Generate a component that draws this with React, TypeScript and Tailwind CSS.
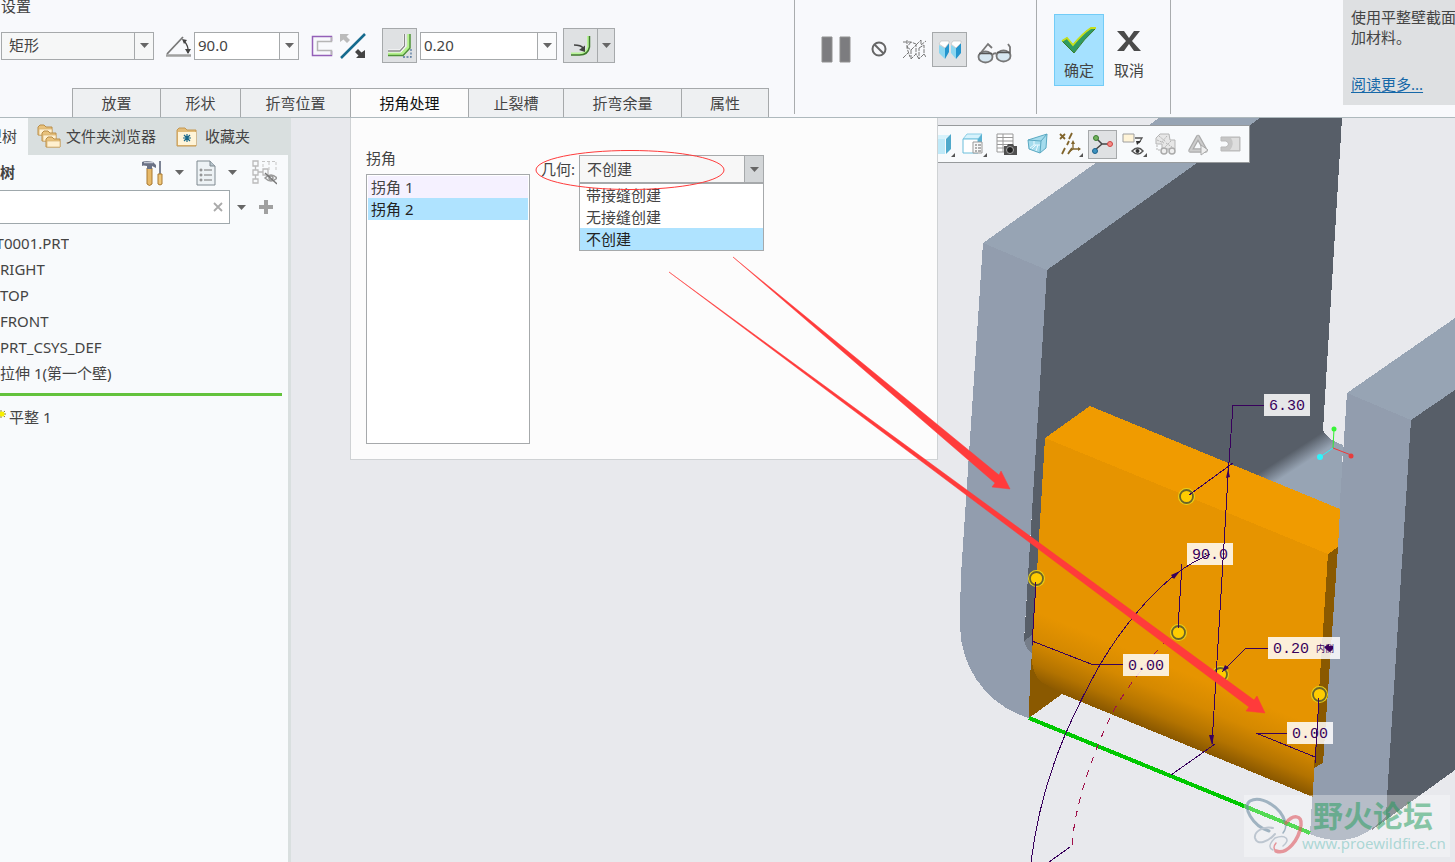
import { useState, type ReactNode } from 'react';

interface IconProps {
  w: number;
  h: number;
  children: ReactNode;
}

function Icon({ w, h, children }: IconProps) {
  return (
    <svg width={w} height={h} viewBox={`0 0 ${w} ${h}`} fill="none" className="block shrink-0" aria-hidden="true">
      {children}
    </svg>
  );
}

function Caret() {
  return (
    <Icon w={9} h={5}>
      <path d="M0 0h9L4.500 5z" fill="#666" />
    </Icon>
  );
}

function SmallCorner() {
  return <path d="M26 22v4h-4z" fill="#555" />;
}

interface ComboProps {
  id: string;
  label: string;
  value: string;
  className: string;
  onChange: (value: string) => void;
}

function Combo({ id, label, value, className, onChange }: ComboProps) {
  return (
    <div className={`flex h-7 border border-[#a6a9ab] bg-white ${className}`}>
      <input
        id={id}
        aria-label={label}
        value={value}
        onChange={(e) => onChange(e.target.value)}
        className="min-w-0 flex-1 px-[3px] outline-none"
      />
      <button type="button" aria-label={`${label} 列表`} className="flex w-[19px] items-center justify-center border-l border-[#a6a9ab] bg-[#fafbfc]">
        <Caret />
      </button>
    </div>
  );
}

const tabs = [
  { name: '放置', width: 'w-[89px]' },
  { name: '形状', width: 'w-[81px]' },
  { name: '折弯位置', width: 'w-[111px]' },
  { name: '拐角处理', width: 'w-[119px]' },
  { name: '止裂槽', width: 'w-[96px]' },
  { name: '折弯余量', width: 'w-[119px]' },
  { name: '属性', width: 'w-[88px]' },
];

function SettingsGroup() {
  const [angle, setAngle] = useState('90.0');
  const [radius, setRadius] = useState('0.20');
  const [active, setActive] = useState('拐角处理');

  return (
    <section className="flex h-[117px] w-[794px] shrink-0 flex-col">
      <h2 className="h-4 pl-px leading-3">设置</h2>
      <div className="mt-3 flex h-[35px] items-center pl-px">
        <div className="flex h-7 w-[153px] border border-[#a6a9ab] bg-[#f6f7f7]">
          <select aria-label="形状" className="min-w-0 flex-1 appearance-none px-[7px] outline-none">
            <option>矩形</option>
          </select>
          <span className="flex w-[19px] items-center justify-center border-l border-[#a6a9ab]">
            <Caret />
          </span>
        </div>
        <label htmlFor="angle" className="ml-3">
          <Icon w={26} h={22}>
            <path d="M0 20.500h25" stroke="#a0a0a0" strokeWidth="2.500" />
            <path d="M1 19L17 2" stroke="#777" strokeWidth="1.800" />
            <path d="M18 6q5 5 4 12" stroke="#444" strokeWidth="1.300" />
            <path d="M16 4l5 1-3 4zM19 14h6l-3 5z" fill="#444" />
          </Icon>
        </label>
        <Combo id="angle" label="角度" value={angle} onChange={setAngle} className="ml-0.5 w-[105px]" />
        <button type="button" aria-label="轮廓" className="ml-3">
          <Icon w={22} h={22}>
            <path d="M20.500 6V1.500H1.500v19h19V16" stroke="#9460b8" strokeWidth="1.500" />
            <path d="M20.500 2v4.500H6.500v9h14V20" stroke="#b5b5b5" strokeWidth="1.500" />
          </Icon>
        </button>
        <button type="button" aria-label="反向" className="ml-[7px]">
          <Icon w={26} h={26}>
            <path d="M1 25L25 1" stroke="#156a8e" strokeWidth="2.500" />
            <path d="M0 1h9L6.500 3.500 10 7 7 10 3.500 6.500 0 9z" fill="#bbb" />
            <path d="M25 25h-9l2.500-2.500L15 19l3-3 3.500 3.500L25 17z" fill="#444" />
          </Icon>
        </button>
        <button type="button" aria-label="在附件上添加折弯" className="ml-4 flex size-[35px] items-center justify-center border border-[#a6a9ab] bg-[#dfe1e3]">
          <Icon w={25} h={25}>
            <path d="M17.500 1v12l-4 5H1" stroke="#fff" strokeWidth="3" />
            <path d="M17.500 1v12l-4.500 5H1" stroke="#888" strokeWidth="1.300" />
            <path d="M21.500 1v13l-7 7H1" stroke="#b5f28c" strokeWidth="2.500" />
            <path d="M23 1v14l-7 7.500H1" stroke="#4f9238" strokeWidth="1.500" />
            <path d="M16 24h8v-8" stroke="#5577a0" strokeWidth="1.300" strokeDasharray="2 1.500" />
          </Icon>
        </button>
        <Combo id="radius" label="半径" value={radius} onChange={setRadius} className="ml-[3px] w-[137px]" />
        <div className="ml-1.5 flex h-[35px] w-[52px] border border-[#a6a9ab] bg-[#dfe1e3]">
          <button type="button" aria-label="内侧" className="flex flex-1 items-center justify-center">
            <Icon w={20} h={22}>
              <path d="M17 1v11q-1.500 7-9.500 6.500H0" stroke="#b9f598" strokeWidth="2" />
              <path d="M18.500 1v11q-1.500 8-10 8H0" stroke="#3f7a2c" strokeWidth="1.500" />
              <path d="M3 10q7 0 9 3" stroke="#444" strokeWidth="1.500" />
              <path d="M14 10.500v6.500l-6-2z" fill="#444" />
            </Icon>
          </button>
          <button type="button" aria-label="半径选项" className="flex w-[17px] items-center justify-center border-l border-[#a6a9ab]">
            <Caret />
          </button>
        </div>
      </div>
      <nav className="mt-auto flex h-[29px] pl-[72px]">
        {tabs.map((tab) => (
          <button
            key={tab.name}
            type="button"
            onClick={() => setActive(tab.name)}
            className={`-mr-px border border-b-0 border-[#a6a9ab] ${tab.width} ${
              active === tab.name ? 'bg-[#fcfcfc] text-[#111]' : 'bg-[#eef0f2]'
            }`}
          >
            {tab.name}
          </button>
        ))}
      </nav>
    </section>
  );
}

function Ribbon() {
  return (
    <header className="flex h-[118px] items-start overflow-hidden border-b border-[#aeb9bd] bg-[#f8f9fc]">
      <SettingsGroup />
      <div className="flex h-[114px] w-[243px] shrink-0 items-start border-x border-[#a9acae] pt-8 pl-[26px]">
        <button type="button" aria-label="暂停" className="mt-1">
          <Icon w={30} h={27}>
            <path d="M1 1h10v25H1zM19 1h10v25H19z" fill="#7c7c7f" stroke="#919191" />
          </Icon>
        </button>
        <button type="button" aria-label="无预览" className="mt-[9px] ml-5">
          <Icon w={16} h={16}>
            <circle cx="8" cy="8" r="6.500" stroke="#666" strokeWidth="2" />
            <path d="M3.500 3.500l9 9" stroke="#666" strokeWidth="2" />
          </Icon>
        </button>
        <button type="button" aria-label="分离" className="mt-[7px] ml-[15px]">
          <Icon w={24} h={22}>
            <path
              d="M1 3h8l5 2M5 1v8l3 9M9 3l-4 5M1 19l5-5M5 8l4 3v9M9 11l5-5v9l-5 5M14 6l5-5M19 1v5l5-4M17 9l5-3v9l-5 5zM17 20l-3-5M22 15l2 3"
              stroke="#777"
              strokeDasharray="4 1"
            />
          </Icon>
        </button>
        <button type="button" aria-label="连接" className="ml-1.5 flex size-[35px] items-center justify-center border border-[#a6a9ab] bg-[#dfe1e3]">
          <Icon w={24} h={20}>
            <path d="M1 5l6 3v11l-6-6zM13 5l5 3v11l-5-6z" fill="#8bd6f0" />
            <path d="M7 8l4-5v9l-4 7zM18 8l5-5v10l-5 6z" fill="#2495cd" />
            <path d="M1 4l2-3h8v2L7 8zM13 4l2-3h8v2l-5 5z" fill="#fff" stroke="#b9b9b9" strokeWidth=".6" />
          </Icon>
        </button>
        <button type="button" aria-label="预览" className="mt-[10px] ml-2.5">
          <Icon w={35} h={22}>
            <path d="M2 13L11 2l4 4M15 13q3-3 5-1M33 13V5l-2-3" stroke="#777" strokeWidth="1.800" />
            <ellipse cx="8.500" cy="15" rx="7" ry="5.500" fill="#d7e7f1" stroke="#777" strokeWidth="1.800" />
            <ellipse cx="26.500" cy="14" rx="7" ry="5.500" fill="#d7e7f1" stroke="#777" strokeWidth="1.800" />
            <path d="M2 11.500h13M20 10.500h13" stroke="#555" strokeWidth="1.300" />
          </Icon>
        </button>
      </div>
      <div className="flex h-[114px] w-[134px] shrink-0 items-start border-r border-[#a9acae] pt-3.5 pl-[17px]">
        <button type="button" className="flex h-[72px] w-[50px] flex-col items-center border border-[#73ccf7] bg-[#a5e1ff] pt-3">
          <Icon w={36} h={27}>
            <path d="M1 14l5-3 6 7Q22 6 30 1h5Q23 12 13 26z" fill="#2f9a62" stroke="#397c26" />
            <path d="M1 14l5-3 6 7Q22 6 30 1h5" stroke="#c5df1c" strokeWidth="1.800" />
          </Icon>
          <span className="mt-1.5 leading-5">确定</span>
        </button>
        <button type="button" className="flex h-[72px] w-[50px] flex-col items-center pt-[17px]">
          <Icon w={24} h={20}>
            <path d="M0 0h7l5 7 5-7h6l-8 10 9 10h-7l-5-7-5 7H0l9-10z" fill="#4b4b4b" />
          </Icon>
          <span className="mt-[9px] leading-5">取消</span>
        </button>
      </div>
      <aside className="ml-auto h-[105px] w-28 shrink-0 overflow-hidden bg-[#dee0e2] pt-[7px] pl-2">
        <p className="leading-5 whitespace-nowrap">
          使用平整壁截面
          <br />
          加材料。
        </p>
        <a href="#more" className="mt-[27px] block leading-5 text-[#1668a8] underline underline-offset-2">
          阅读更多...
        </a>
      </aside>
    </header>
  );
}

const treeItems = ['RIGHT', 'TOP', 'FRONT', 'PRT_CSYS_DEF', '拉伸 1(第一个壁)'];

function ModelTree() {
  const [query, setQuery] = useState('');

  return (
    <aside className="w-[291px] shrink-0 overflow-hidden border-r-3 border-[#d9dfdf] bg-[#f8fafc]">
      <div className="-mr-[3px] flex h-[37px] bg-[#d9dfdf]">
        <button type="button" className="flex w-7 items-center justify-end overflow-hidden bg-[#f8fafc] pr-[11px] whitespace-nowrap">
          型树
        </button>
        <button type="button" className="ml-[9px] flex items-center gap-1">
          <Icon w={25} h={25}>
            {[0, 1, 2].map((i) => (
              <g key={i} transform={`translate(${i * 4} ${i * 6})`}>
                <path d="M1 3l2-2h4l2 2h6v8H1z" fill="#e9c27c" stroke="#b98d48" />
                <path d="M2 5h13v6H2z" fill="#fff0cf" stroke="#d4b06f" strokeWidth=".7" />
              </g>
            ))}
          </Icon>
          文件夹浏览器
        </button>
        <button type="button" className="ml-5 flex items-center gap-[7px]">
          <Icon w={22} h={20}>
            <path d="M1 3l2-2h6l2 2h9v16H1z" fill="#e3bd79" stroke="#c59852" />
            <path d="M2 5h18v13H2z" fill="#fff4d8" />
            <path d="M11 7v8M7 11h8M8 8l6 6M14 8l-6 6" stroke="#17678a" strokeWidth="1.200" />
          </Icon>
          收藏夹
        </button>
      </div>

      <div className="flex h-[35px] items-center pr-[11px]">
        <h2 className="mr-auto font-bold">树</h2>
        <button type="button" aria-label="设置" className="mr-3">
          <Icon w={21} h={26}>
            <path d="M5 8h5v16q-2.500 3-5 0z" fill="#e7b969" stroke="#a97931" />
            <path d="M0 2q4-2 11 0l3 3v3l-4-2v3H5V6Q1 5 0 6z" fill="#6b7285" />
            <path d="M2 2.500h9" stroke="#c5cad5" strokeWidth="1.500" />
            <path d="M18 1v13" stroke="#7d8495" strokeWidth="2" />
            <path d="M16 14h4v10q-2 2-4 0z" fill="#efc77a" stroke="#a97931" />
          </Icon>
        </button>
        <Caret />
        <button type="button" aria-label="显示" className="mx-3">
          <Icon w={20} h={26}>
            <path d="M1 1h13l5 5v19H1z" fill="#edf2f5" stroke="#7f8990" />
            <path d="M14 1v5h5" stroke="#7f8990" fill="#b7c4cc" />
            <path d="M8 10h8M8 15h8M8 20h8" stroke="#777" />
            <circle cx="5" cy="10" r="1" stroke="#777" />
            <circle cx="5" cy="15" r="1" stroke="#777" />
            <circle cx="5" cy="20" r="1" stroke="#777" />
          </Icon>
        </button>
        <Caret />
        <button type="button" aria-label="隐藏列" className="ml-[15px]">
          <Icon w={25} h={25}>
            <path d="M1 1h5v5H1zM1 10h5v5H1zM1 19h5v4H1zM3.500 6v4M3.500 15v4M6 12h5M11 9h5v6h-5z" stroke="#bbb" strokeWidth="1.300" />
            <path d="M10 1.500h13M11 4v3M17 2v8M24 2v8" stroke="#c6c6c6" strokeDasharray="3 2" />
            <path d="M13 18q6-6 12 0-6 6-12 0z" stroke="#999" strokeWidth="1.500" />
            <circle cx="19" cy="18" r="2" stroke="#999" strokeWidth="1.500" />
            <path d="M13 13l12 11" stroke="#777" strokeWidth="1.300" />
          </Icon>
        </button>
      </div>

      <div className="flex items-center">
        <div className="flex h-[34px] w-[230px] items-center border border-l-0 border-[#9fa8ac] bg-white pr-1.5">
          <input aria-label="搜索" value={query} onChange={(e) => setQuery(e.target.value)} className="min-w-0 flex-1 outline-none" />
          <button type="button" aria-label="清除" onClick={() => setQuery('')}>
            <Icon w={10} h={10}>
              <path d="M1 1l8 8M9 1L1 9" stroke="#aaa" strokeWidth="1.800" />
            </Icon>
          </button>
        </div>
        <button type="button" aria-label="搜索选项" className="ml-[7px]">
          <Caret />
        </button>
        <button type="button" aria-label="添加" className="ml-[13px]">
          <Icon w={14} h={14}>
            <path d="M7 0v14M0 7h14" stroke="#a0a0a0" strokeWidth="4" />
          </Icon>
        </button>
      </div>

      <ul className="mt-1.5 leading-[26px] whitespace-nowrap">
        <li className="flex w-[69px] justify-end overflow-hidden">T0001.PRT</li>
        {treeItems.map((item) => (
          <li key={item}>{item}</li>
        ))}
        <li className="mt-[7px] mr-1.5 mb-2 h-[3px] bg-[#63c23c]" />
        <li className="flex items-center gap-0.5">
          <Icon w={7} h={16}>
            <path d="M1 1v8M-3 5h9M-2 2l7 6M-2 8l7-6" stroke="#8b8520" />
            <circle cx="2" cy="5" r="2.500" fill="#f8f000" />
          </Icon>
          平整 1
        </li>
      </ul>
    </aside>
  );
}

const corners = ['拐角 1', '拐角 2'];
const geometryOptions = ['带接缝创建', '无接缝创建', '不创建'];

function CornerPanel() {
  const [corner, setCorner] = useState('拐角 2');
  const [geometry, setGeometry] = useState('不创建');

  return (
    <section className="z-10 ml-[59px] flex h-[342px] w-[588px] shrink-0 items-start border border-t-0 border-[#cfd2d4] bg-[#fcfcfc] pl-[15px]">
      <div className="mt-[30px] w-[164px]">
        <h3 className="mb-1.5 leading-5">拐角</h3>
        <ul className="h-[270px] border border-[#a6a9ab] bg-white p-px leading-[22px]">
          {corners.map((name) => (
            <li key={name}>
              <button
                type="button"
                onClick={() => setCorner(name)}
                className={`w-full pl-[3px] text-left ${corner === name ? 'bg-[#afe3ff] text-[#222]' : 'bg-[#f5f1ff]'}`}
              >
                {name}
              </button>
            </li>
          ))}
        </ul>
      </div>
      <label htmlFor="geometry" className="mt-[37px] ml-[11px] w-[38px] leading-7">
        几何:
      </label>
      <div className="mt-[37px] w-[185px]">
        <div className="flex h-7 border border-[#a6a9ab] bg-[#f7f7f7]">
          <select
            id="geometry"
            value={geometry}
            onChange={(e) => setGeometry(e.target.value)}
            className="min-w-0 flex-1 appearance-none px-[7px] outline-none"
          >
            {geometryOptions.map((option) => (
              <option key={option}>{option}</option>
            ))}
          </select>
          <span className="flex w-[19px] items-center justify-center border-l border-[#a6a9ab] bg-[#d3d6d8]">
            <Caret />
          </span>
        </div>
        <ul className="border border-[#a6a9ab] bg-white leading-[22px]">
          {geometryOptions.map((option) => (
            <li key={option}>
              <button
                type="button"
                onClick={() => setGeometry(option)}
                className={`w-full pl-1.5 text-left ${geometry === option ? 'bg-[#afe3ff] text-[#222]' : ''}`}
              >
                {option}
              </button>
            </li>
          ))}
        </ul>
      </div>
    </section>
  );
}

const tools = [
  {
    name: '显示样式',
    icon: (
      <>
        <path d="M1 8l5-4h15l-5 4z" fill="#d7f2fb" />
        <path d="M1 8h15v15H1z" fill="#bfe9f8" />
        <path d="M17 8l5-5v15l-5 5z" fill="#4fa9cb" />
        <SmallCorner />
      </>
    ),
  },
  {
    name: '已保存方向',
    icon: (
      <>
        <path d="M2 8l4-5h15l-4 5z" fill="#d6f2fc" stroke="#8dcfe6" />
        <path d="M2 8h15v14H2z" fill="#fff" stroke="#6bbedb" />
        <path d="M17 8l4-5v12l-4 5z" fill="#5bb2d2" />
        <path d="M12 11h9v11h-9z" fill="#f8f8f8" stroke="#999" />
        <path d="M14 14h2M14 17h2M14 20h2M17 14h3M17 17h3M17 20h3" stroke="#666" />
        <SmallCorner />
      </>
    ),
  },
  {
    name: '视图管理器',
    icon: (
      <>
        <path d="M4 3h16v18H4zM4 6.500h16M4 10h16M4 13.500h16M4 17h16M10 3v18" fill="#fff" stroke="#999" />
        <path d="M11 15h3l1-2h5l1 2h3v9H11z" fill="#505050" />
        <circle cx="17" cy="19" r="3.500" fill="#222" stroke="#aaa" />
      </>
    ),
  },
  {
    name: '透视图',
    icon: (
      <>
        <path d="M3 9L22 3l-1 14-6 5-11-4z" fill="#a5dced" stroke="#5ba9c2" />
        <path d="M3 9l13 1 6-7M16 10l-1 12" stroke="#5ba9c2" />
        <path d="M5 17l4-3h6M9 14v-4M7 18l4-4M11 20l2-6" stroke="#eaf9ff" />
      </>
    ),
  },
  {
    name: '基准显示',
    icon: (
      <>
        <path d="M3 3l5 5M8 3L3 8M15 2l-3 6M12 10l-2 4M8 17l-3 6M15 17l-4 6" stroke="#80642b" strokeWidth="1.800" />
        <path d="M16 11v7h7M16 18l-4 3" stroke="#80642b" strokeWidth="1.300" />
        <path d="M14 13l2-4 2 4zM21 16l3 2-3 2z" fill="#80642b" />
        <SmallCorner />
      </>
    ),
  },
  {
    name: '旋转中心',
    pressed: true,
    icon: (
      <>
        <path d="M7 7l6 6h8M13 13l-7 6" stroke="#444" strokeWidth="1.500" />
        <circle cx="7" cy="7" r="2.500" fill="#71b35d" stroke="#3c7c31" />
        <circle cx="21" cy="13" r="2.500" fill="#f58a84" stroke="#c44" />
        <circle cx="6" cy="20" r="2.500" fill="#3d91be" stroke="#1c628c" />
      </>
    ),
  },
  {
    name: '注释显示',
    icon: (
      <>
        <path d="M2 3h11v8H2z" fill="#fff4d8" stroke="#9e9e9e" />
        <path d="M14 7h7l-3 5" stroke="#555" strokeWidth="1.300" />
        <path d="M15 10l5 0-4 4z" fill="#333" />
        <path d="M11 20q6-6 11 0-5 6-11 0z" fill="#fff" stroke="#555" strokeWidth="1.500" />
        <circle cx="16.500" cy="20" r="2" fill="#333" />
        <SmallCorner />
      </>
    ),
  },
  {
    name: '仿真查询',
    icon: (
      <>
        <path d="M3 7l4-4h9l1 6h5v9H9V13H3z" fill="#e7e7e7" stroke="#b5b5b5" />
        <path d="M6 5l7 6M14 5l-6 7M4 9l7 3M13 12l6 4M18 10l-6 6M4 14v5h4" stroke="#b5b5b5" strokeDasharray="2 1" />
        <circle cx="11" cy="20" r="3" fill="#eee" stroke="#aaa" strokeWidth="1.500" />
        <circle cx="19" cy="20" r="3" fill="#eee" stroke="#aaa" strokeWidth="1.500" />
      </>
    ),
  },
  {
    name: '失败项',
    icon: (
      <>
        <path d="M13 6L5.500 19.500h15z" stroke="#aaa" strokeWidth="4.500" strokeLinejoin="round" />
        <path d="M13 6L5.500 19.500h15z" stroke="#ccc" strokeWidth="2" />
        <path d="M16 14l7 5-7 5z" fill="#eee" stroke="#aaa" />
      </>
    ),
  },
  {
    name: '截面',
    icon: (
      <>
        <path d="M4 6h19v14H4v-4h5q5-3 0-6H4z" fill="#c6c6c6" stroke="#b9b9b9" />
        <path d="M14 7h8v12h-9q5-6 1-12z" fill="#dedede" />
      </>
    ),
  },
];

function ViewToolbar() {
  return (
    <div className="z-10 mt-[7px] flex h-[38px] w-[312px] shrink-0 items-center justify-end overflow-hidden border border-l-0 border-[#979a9c] bg-[#f8fafc] pr-[3px]">
      {tools.map((tool) => (
        <button key={tool.name} type="button" aria-label={tool.name} className="flex w-8 shrink-0 justify-center">
          <span className={`flex size-[29px] items-center justify-center ${tool.pressed ? 'border border-[#a6a9ab] bg-[#dfe1e3]' : ''}`}>
            <Icon w={27} h={27}>{tool.icon}</Icon>
          </span>
        </button>
      ))}
    </div>
  );
}

const handles = [
  [1186, 496],
  [1036, 578],
  [1178, 632],
  [1220, 674],
  [1319, 694],
];

const dimensions = [
  { x: 1264, y: 394, w: 46, text: '6.30' },
  { x: 1187, y: 543, w: 46, text: '90.0' },
  { x: 1123, y: 654, w: 46, text: '0.00' },
  { x: 1268, y: 637, w: 72, text: '0.20' },
  { x: 1287, y: 722, w: 46, text: '0.00' },
];

function ModelView() {
  return (
    <svg viewBox="291 118 1164 744" preserveAspectRatio="xMidYMid slice" className="absolute inset-0 size-full" fill="none">
      <defs>
        <linearGradient id="bend" gradientUnits="userSpaceOnUse" x1="1188" y1="745" x2="1213" y2="684">
          <stop offset="0" stopColor="#8a5800" />
          <stop offset=".25" stopColor="#b37300" />
          <stop offset=".6" stopColor="#d58900" />
          <stop offset="1" stopColor="#e69400" />
        </linearGradient>
        <linearGradient id="floor" gradientUnits="userSpaceOnUse" x1="1290" y1="453" x2="1299" y2="467">
          <stop offset="0" stopColor="#575e68" />
          <stop offset="1" stopColor="#97a4b4" />
        </linearGradient>
      </defs>

      <g shapeRendering="crispEdges">
        {/* left wall */}
        <path d="M1047 269L1260 118h82l-19 312-65 55-226 170-8-14z" fill="#575e68" />
        <path d="M1323 430q4 10 20 15l-3 66-86-35z" fill="url(#floor)" />
        <path d="M983 243L1159 118h101L1047 270z" fill="#97a4b4" />
        <path d="M983 243l64 27-23 370 8 12-3 66C990 707 960 670 960 625q0-25 1-50z" fill="#929dae" />
        <path d="M1024 641l8-6v18q-5-2-8-12z" fill="#757d89" />

        {/* right wall */}
        <path d="M1347 393l108-75v72l-44 31z" fill="#97a4b4" />
        <path d="M1411 420l44-30v380l-83 60-20-30z" fill="#575e68" />
        <path d="M1347 393l64 27-24 378-1 18q-22 24-47 24-16 0-29-6l4-67 9-4z" fill="#929dae" />

        {/* flat wall feature */}
        <path d="M1045 438l45-32 250 103-2 39-10 7z" fill="#f09b00" />
        <path d="M1045 438l283 116-14 214-1 29-251-103-33 10z" fill="url(#bend)" />
        <path d="M1328 554l10-7-15 216-9 5z" fill="#8a5900" />
        <path d="M1031 655q2 24 14 29l17 10-33 24z" fill="#8a5900" />
        <path d="M1029 718l281 115" stroke="#00c800" strokeWidth="4" />
      </g>

      {handles.map(([x, y]) => (
        <g key={`${x}-${y}`}>
          <circle cx={x + 0.5} cy={y + 0.5} r="8.500" fill="#e8cf18" />
          <circle cx={x + 0.5} cy={y + 0.5} r="6.500" fill="#ffcc00" stroke="#6b6428" strokeWidth="1.800" />
        </g>
      ))}

      <path
        d="M1072 845C1075 800 1098 738 1118 703Q1138 672 1164 643"
        stroke="#a0104a"
        strokeDasharray="7 7"
        shapeRendering="crispEdges"
      />
      {dimensions.map((d) => (
        <rect key={d.y} x={d.x} y={d.y} width={d.w} height="22" fill="#fff" fillOpacity=".85" />
      ))}
      <g stroke="#38005c" shapeRendering="crispEdges">
        <path d="M1264 405h-31l-5 72-16 267M1189 495l44-32M1215 744l-44 31" />
        <path d="M1036 582l-4 63M1032 641l59 23h32M1178 628l4-64" />
        <path d="M1031 862C1040 790 1062 732 1101 663Q1134 608 1176 574 1190 563 1210 554" />
        <path d="M1049 862l21-15M1268 648h-22l-24 24M1287 733h-31l59 24M1319 698l-4 65" />
      </g>
      <path
        d="M1228 469l2 8-4 1zM1212 745l-3-10h5zM1180 571l-9 4 3 4zM1222 672l3-7 4 3zM1324 647l5-3v2h4v3l-3 3-3-2z"
        fill="#38005c"
      />
      <g fill="#38005c" fontSize="15" className="font-['Liberation_Mono','Noto_Sans_CJK_SC',monospace]">
        {dimensions.map((d) => (
          <text key={d.y} x={d.x + 5} y={d.y + 16}>
            {d.text}
          </text>
        ))}
        <text x="1316" y="652" fontSize="9">
          内侧
        </text>
      </g>

      <path d="M1333 448l1-19" stroke="#2df02d" />
      <path d="M1333 448l18 7" stroke="#f03838" />
      <path d="M1333 448l-13 9" stroke="#2df0f8" />
      <circle cx="1334" cy="429" r="2.500" fill="#37f437" />
      <circle cx="1351" cy="456" r="2.500" fill="#e83c3c" />
      <circle cx="1320" cy="457" r="3" fill="#2df4fc" />

      {/* watermark */}
      <rect x="1244" y="795" width="206" height="62" fill="#fff" fillOpacity=".33" />
      <g strokeLinecap="round" opacity=".6">
        <path d="M1269 831C1252 826 1242 806 1250 801 1261 795 1281 807 1285 822" stroke="#6c8ba0" strokeWidth="3" />
        <path d="M1285 822q2 6-2 11" stroke="#6c8ba0" strokeWidth="1.500" />
        <path d="M1286 823C1293 814 1302 815 1301 825 1299 840 1287 855 1276 851" stroke="#df5961" strokeWidth="3.500" />
        <path d="M1276 851q-4-3 0-8" stroke="#df5961" strokeWidth="1.500" />
        <path d="M1273 828C1262 826 1254 832 1255 838 1257 846 1268 842 1275 834" stroke="#9dabba" strokeWidth="2" />
        <path d="M1275 838Q1266 847 1273 850M1275 838q8-3 11 0 3 3-3 8" stroke="#9dabba" strokeWidth="1.500" />
      </g>
      <text x="1313" y="827" fontSize="30" fontWeight="700" fill="#1c9a57" fillOpacity=".5" className="font-['Noto_Sans_CJK_SC',sans-serif]">
        野火论坛
      </text>
      <text x="1302" y="849" fontSize="15" fill="#86c8c4" fillOpacity=".65" className="font-['Noto_Sans',sans-serif]">
        www.proewildfire.cn
      </text>
    </svg>
  );
}

function Annotations() {
  return (
    <svg
      viewBox="291 118 1164 744"
      preserveAspectRatio="xMidYMid slice"
      className="pointer-events-none absolute inset-0 z-20 size-full"
      fill="#ff3b3b"
    >
      <ellipse cx="630" cy="170" rx="94" ry="19.500" fill="none" stroke="#ff3b3b" />
      <path d="M733 257L999 475l2-4 9 18-18-2 3-4L733 257z" stroke="#ff3b3b" strokeWidth=".5" />
      <path d="M669 272L1254 700l3-4 8 17-19-2 3-4L669 272z" stroke="#ff3b3b" strokeWidth=".5" />
    </svg>
  );
}

export default function App() {
  return (
    <div className="flex min-h-screen flex-col bg-[#e8e9ed] font-['Noto_Sans','Noto_Sans_CJK_SC',sans-serif] text-[15px] text-[#444]">
      <Ribbon />
      <div className="flex flex-1">
        <ModelTree />
        <main className="relative flex flex-1 items-start overflow-hidden">
          <ModelView />
          <CornerPanel />
          <ViewToolbar />
          <Annotations />
        </main>
      </div>
    </div>
  );
}
